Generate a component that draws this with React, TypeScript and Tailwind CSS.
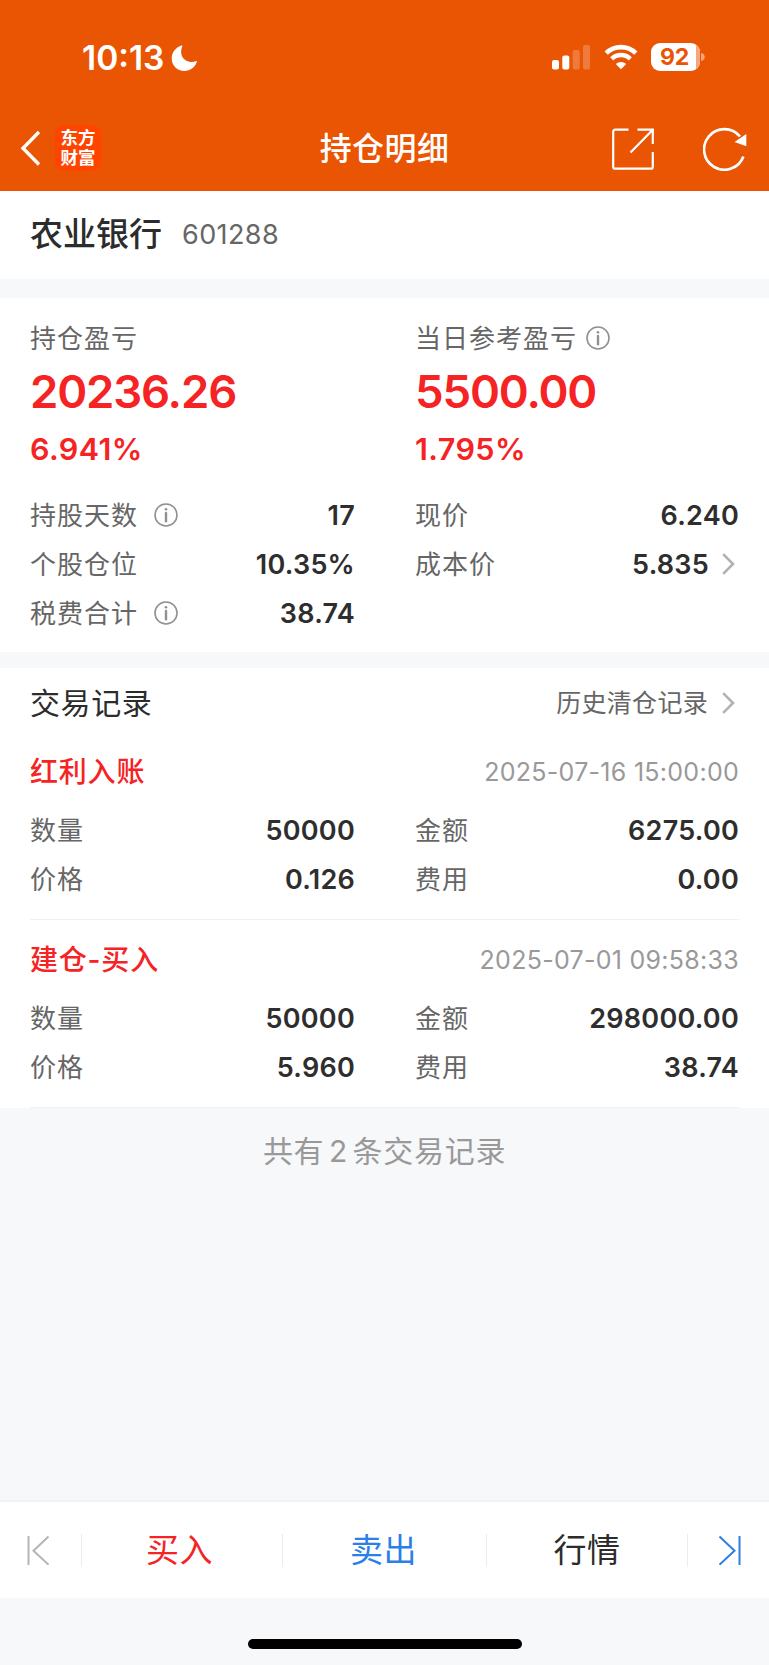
import type { ReactNode } from 'react';

const red = 'text-[#f52323]';

function Info({ className = '' }: { className?: string }) {
  return (
    <svg className={`mb-[2px] h-6 w-6 shrink-0 ${className}`} viewBox="0 0 24 24" fill="none" stroke="#909090">
      <circle cx="12" cy="12" r="11" strokeWidth="1.6" />
      <path d="M12 10v8.200" strokeWidth="2.400" strokeLinecap="round" />
      <circle cx="12" cy="6.200" r="1.300" fill="#909090" stroke="none" />
    </svg>
  );
}

function Chevron() {
  return (
    <svg className="mb-[1px] h-[22px] w-[13px] shrink-0" viewBox="0 0 13 22" fill="none" stroke="#b2b2b2" strokeWidth="2.600">
      <path d="M1.200 1.200 11 11 1.200 20.800" />
    </svg>
  );
}

function Row({ label, value, info, chevron }: { label: string; value: string; info?: boolean; chevron?: boolean }) {
  return (
    <div className="flex h-[49px] items-center text-[26px] tracking-[1px] text-[#666]">
      <span>{label}</span>
      {info && <Info className="ml-[16px]" />}
      <span className="ml-auto pt-[2px] text-[27px] font-semibold tracking-[0.250px] text-[#2e2e2e]">{value}</span>
      {chevron && (
        <span className="mr-[4px] ml-[13px] flex">
          <Chevron />
        </span>
      )}
    </div>
  );
}

function Columns({ left, right }: { left: ReactNode; right: ReactNode }) {
  return (
    <div className="flex justify-between">
      <div className="w-[325px]">{left}</div>
      <div className="w-[324px]">{right}</div>
    </div>
  );
}

function Profit({ label, amount, rate, info }: { label: string; amount: string; rate: string; info?: boolean }) {
  return (
    <div className={red}>
      <div className="flex h-[50px] items-center text-[26px] tracking-[1px] text-[#666]">
        {label}
        {info && <Info className="mt-[1px] ml-[9px]" />}
      </div>
      <div className="flex h-[58px] items-center text-[45.500px] font-semibold tracking-[-1.150px]">{amount}</div>
      <div className="flex h-[54px] items-center pt-[2px] text-[30.500px] font-semibold tracking-[0.400px]">{rate}</div>
    </div>
  );
}

function Trade({ title, time, rows }: { title: string; time: string; rows: string[] }) {
  return (
    <div className="h-[188px] border-b border-[#f0f0f0] pt-[14px]">
      <div className="flex h-[52px] items-center justify-between">
        <span className={`text-[28px] font-medium tracking-[0.800px] ${red}`}>{title}</span>
        <span className="pt-[1px] text-[25px] tracking-[0.280px] text-[#999]">{time}</span>
      </div>
      <div className="pt-[8px]">
        <Columns
          left={<><Row label="数量" value={rows[0]} /><Row label="价格" value={rows[1]} /></>}
          right={<><Row label="金额" value={rows[2]} /><Row label="费用" value={rows[3]} /></>}
        />
      </div>
    </div>
  );
}

function StatusBar() {
  return (
    <div className="flex h-[114px] items-center pr-[64px] pl-[82px]">
      <span className="pt-[3px] text-[33.500px] leading-none font-semibold">10:13</span>
      <svg className="mt-[2px] ml-[7px] h-[27px] w-[27px]" viewBox="0 0 27 27" fill="white">
        <path d="M10.200.6C4.600 2.600.7 7.800.7 13.600c0 7 5.700 12.500 12.700 12.500 5.600 0 10.500-3.600 12.400-9 .3-.8-.3-1.200-1-.9-2 .8-4.200 1-6.400.5C11.500 15.300 8.200 8.400 11.200 1.700c.4-.8-.1-1.400-1-1.100z" />
      </svg>
      <svg className="ml-auto h-[26px] w-[39px]" viewBox="0 0 39 26" fill="white">
        <rect x="0" y="16" width="7" height="9.500" rx="2" />
        <rect x="10.300" y="11.500" width="7" height="14" rx="2" />
        <rect x="20.700" y="6" width="7" height="19.500" rx="2" opacity=".22" />
        <rect x="31" y="1" width="7" height="24.500" rx="2" opacity=".22" />
      </svg>
      <svg className="ml-[13px] h-[26px] w-[34px]" viewBox="0 0 34 26" fill="none" stroke="white">
        <path d="M2.200 9.200a21 21 0 0 1 29.600 0" strokeWidth="4.600" />
        <path d="M7.700 14.900a13.200 13.200 0 0 1 18.600 0" strokeWidth="4.400" />
        <path d="M17 25.300l-5.200-5.200a7.400 7.400 0 0 1 10.400 0z" fill="white" stroke="none" />
      </svg>
      <div className="relative ml-[13px] flex h-[28px] w-[49px] items-center justify-center overflow-hidden rounded-[9px] bg-white pt-[1px] pr-[2px] text-[23px] leading-none font-bold tracking-[-0.300px] text-[#ea5504]">
        <span className="absolute inset-y-0 right-0 w-[4px] bg-[#f5a67c]" />
        92
      </div>
      <svg className="ml-[1px] h-[8px] w-[4px]" viewBox="0 0 4 8" fill="#f5a67c">
        <path d="M0 0c5 1 5 7 0 8z" />
      </svg>
    </div>
  );
}

function NavBar() {
  return (
    <div className="relative flex h-[77px] items-center pr-[22px] pb-[9px] pl-[20px]">
      <svg className="h-[36px] w-[22px]" viewBox="0 0 22 36" fill="none" stroke="white" strokeWidth="3.400">
        <path d="M19 2 3 18.300 19 34.500" />
      </svg>
      <div className="ml-[13px] flex h-[46px] w-[46px] flex-col items-center justify-center rounded-[9px] bg-[#ff4400] pb-[1px] text-[17.500px] leading-[19.500px] font-bold">
        <span>东方</span>
        <span>财富</span>
      </div>
      <div className="absolute inset-x-0 top-[12px] text-center text-[32px] leading-[46px] font-medium tracking-[0.400px]">持仓明细</div>
      <svg className="mt-[1px] ml-auto h-[42px] w-[42px]" viewBox="0 0 42 42" fill="none" stroke="white" strokeWidth="2.200">
        <path d="M16.500 1.700H3.200a2 2 0 0 0-2 2v35a2 2 0 0 0 2 2h35.600a2 2 0 0 0 2-2V24M25.500 1.700h15.300V16M40.300 2.200 18.500 24.500" />
      </svg>
      <svg className="mt-[1px] ml-[49px] h-[44px] w-[44px]" viewBox="0 0 44 44" fill="none" stroke="white" strokeWidth="2.700">
        <path d="M40.400 29.500A20.300 20.300 0 1 1 37 9.500" />
        <path d="M43.300 7v12.200L31.500 15z" fill="white" stroke="none" />
      </svg>
    </div>
  );
}

export default function App() {
  return (
    <div className="flex h-[1665px] w-[769px] flex-col overflow-hidden bg-[#f7f8fa] font-[Inter,'Noto_Sans_CJK_SC',sans-serif] whitespace-nowrap">
      <header className="h-[191px] bg-[#ea5504] text-white">
        <StatusBar />
        <NavBar />
      </header>

      <section className="flex h-[88px] items-center bg-white px-[30px] text-[#2c2c2c]">
        <h1 className="text-[33px] font-medium">农业银行</h1>
        <span className="ml-[20px] text-[27px] tracking-[0.400px] text-[#666]">601288</span>
      </section>

      <section className="mt-[19px] h-[354px] bg-white px-[30px] pt-[15px]">
        <Columns
          left={<Profit label="持仓盈亏" amount="20236.26" rate="6.941%" />}
          right={<Profit label="当日参考盈亏" amount="5500.00" rate="1.795%" info />}
        />
        <div className="pt-[16px]">
          <Columns
            left={<><Row label="持股天数" value="17" info /><Row label="个股仓位" value="10.35%" /><Row label="税费合计" value="38.74" info /></>}
            right={<><Row label="现价" value="6.240" /><Row label="成本价" value="5.835" chevron /></>}
          />
        </div>
      </section>

      <section className="mt-[16px] h-[440px] bg-white px-[30px]">
        <div className="flex h-[64px] items-center pt-[6px]">
          <h2 className="text-[30px] tracking-[0.600px] text-[#2c2c2c]">交易记录</h2>
          <span className="mr-[14px] ml-auto pt-[2px] text-[25px] tracking-[0.300px] text-[#666]">历史清仓记录</span>
          <span className="mr-[4px] flex"><Chevron /></span>
        </div>
        <Trade title="红利入账" time="2025-07-16 15:00:00" rows={['50000', '0.126', '6275.00', '0.00']} />
        <Trade title="建仓-买入" time="2025-07-01 09:58:33" rows={['50000', '5.960', '298000.00', '38.74']} />
      </section>

      <p className="flex h-[86px] items-center justify-center text-[30px] tracking-[0.700px] text-[#999] [word-spacing:-4.500px]">共有 2 条交易记录</p>

      <nav className="mt-auto flex h-[98px] items-center border-t-2 border-[#f1f2f4] bg-white text-[33px] tracking-[0.500px]">
        <div className="flex w-[81px] justify-center pr-[5px]">
          <svg className="h-[30px] w-[24px]" viewBox="0 0 24 30" fill="none" stroke="#b5b5b5" strokeWidth="2">
            <path d="M2.500 1v29M22.500 1.500 7.500 15.700l15 14" />
          </svg>
        </div>
        <div className={`flex h-[33px] w-[201px] items-center justify-center border-l border-[#ececee] pt-[2px] pr-[5px] ${red}`}>买入</div>
        <div className="flex h-[33px] w-[204px] items-center justify-center border-l border-[#ececee] pt-[2px] pr-[2px] text-[#2c7fe8]">卖出</div>
        <div className="flex h-[33px] w-[201px] items-center justify-center border-l border-[#ececee] pt-[2px] text-[#2c2c2c]">行情</div>
        <div className="flex h-[33px] flex-1 items-center border-l border-[#ececee] pl-[30px]">
          <svg className="h-[30px] w-[24px]" viewBox="0 0 24 30" fill="none" stroke="#2c7fe8" strokeWidth="2">
            <path d="M21.500 1v29M1.500 1.500l15 14.200-15 14" />
          </svg>
        </div>
      </nav>
      <footer className="flex h-[67px] justify-center pt-[41px]">
        <div className="h-[10px] w-[274px] rounded-full bg-black" />
      </footer>
    </div>
  );
}
